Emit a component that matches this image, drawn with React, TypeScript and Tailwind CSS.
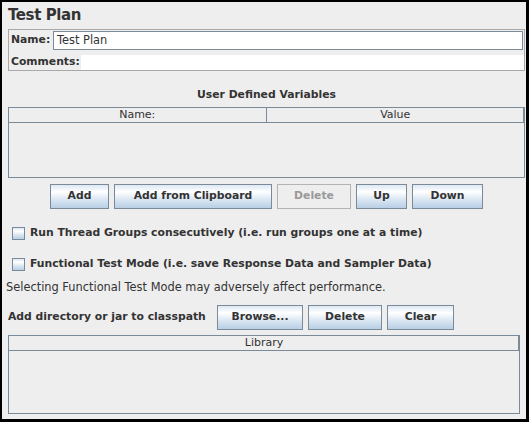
import React from 'react';

// Swing "Ocean" style push button
const Btn = ({label, w, disabled}: { label: string; w: string; disabled?: boolean }) => (
    <div
        className={`${w} h-[25px] flex items-center justify-center border font-bold text-[10.8px] ${
            disabled
                ? 'border-[#b3b3b3] bg-[#eeeeee] text-[#999999]'
                : 'border-[#7a8a99] bg-[linear-gradient(to_bottom,#dde8f3_0%,#ffffff_30%,#dde8f3_60%,#b8cfe5_100%)] text-[#333333]'
        }`}
    >
        {label}
    </div>
);

const Check = ({label}: { label: string }) => (
    <div className="h-[21px] flex items-center">
        <div
            className="ml-[4px] w-[13px] h-[13px] border border-[#7a8a99] bg-[linear-gradient(to_bottom,#dde8f3_0%,#ffffff_30%,#dde8f3_60%,#b8cfe5_100%)]"/>
        <span className="ml-[5px] font-bold text-[10.8px] whitespace-nowrap">{label}</span>
    </div>
);

export default function App() {
    return (
        <div
            className="w-[529px] h-[422px] overflow-hidden bg-[#eeeeee] border-solid border-black border-t-2 border-l-2 border-r-[3px] border-b-[3px] pl-[6px] pr-[1px] flex flex-col font-['DejaVu_Sans',sans-serif] text-[#333333]">
            {/* title */}
            <div className="h-[27px] shrink-0 pt-[3px] text-[15px] leading-[20px] font-bold tracking-[-0.4px]">Test Plan</div>

            {/* name / comments */}
            <div className="h-[42px] shrink-0 border border-[#a9a9a9] flex flex-col">
                <div className="mt-[1px] h-[19px] flex items-center">
                    <span className="w-[44px] pl-[2px] font-bold text-[10.8px]">Name:</span>
                    <div
                        className="flex-1 mr-[1px] h-[19px] border border-[#7a8a99] bg-white pl-[3px] text-[11.4px] leading-[17px]">Test
                        Plan
                    </div>
                </div>
                <div className="mt-[5px] h-[15px] flex items-center">
                    <span className="w-[72px] pl-[2px] font-bold text-[10.8px]">Comments:</span>
                    <div className="flex-1 h-[15px] bg-white"/>
                </div>
            </div>

            {/* user defined variables */}
            <div className="h-[36px] shrink-0 pt-[17px] leading-[14px] text-center font-bold text-[10.8px]">User Defined
                Variables
            </div>
            <div className="h-[71px] shrink-0 border border-[#7a8a99] flex flex-col">
                <div
                    className="h-[15px] border-b border-[#7a8a99] grid grid-cols-2 text-[11px] leading-[14px] shadow-[inset_-1px_0_0_#7a8a99]">
                    <div className="text-center border-r border-[#7a8a99]">Name:</div>
                    <div className="text-center">Value</div>
                </div>
            </div>

            <div className="mt-[6px] h-[25px] shrink-0 flex justify-center gap-[5px]">
                <Btn label="Add" w="w-[59px]"/>
                <Btn label="Add from Clipboard" w="w-[158px]"/>
                <Btn label="Delete" w="w-[74px]" disabled/>
                <Btn label="Up" w="w-[51px]"/>
                <Btn label="Down" w="w-[71px]"/>
            </div>

            {/* options */}
            <div className="mt-[14px] shrink-0">
                <Check label="Run Thread Groups consecutively (i.e. run groups one at a time)"/>
            </div>
            <div className="mt-[10px] shrink-0">
                <Check label="Functional Test Mode (i.e. save Response Data and Sampler Data)"/>
            </div>
            <div className="mt-[3px] h-[18px] shrink-0 -ml-[2px] text-[11.4px] leading-[18px] whitespace-nowrap">
                Selecting Functional Test Mode may adversely affect performance.
            </div>

            {/* classpath */}
            <div className="mt-[9px] h-[25px] shrink-0 flex items-center">
                <span className="w-[209px] font-bold text-[10.8px] whitespace-nowrap">Add directory or jar to classpath</span>
                <div className="flex gap-[5px]">
                    <Btn label="Browse..." w="w-[86px]"/>
                    <Btn label="Delete" w="w-[74px]"/>
                    <Btn label="Clear" w="w-[67px]"/>
                </div>
            </div>
            <div className="mt-[5px] w-[512px] h-[79px] shrink-0 border border-[#7a8a99] flex flex-col">
                <div
                    className="h-[15px] border-b border-[#7a8a99] text-center text-[11px] leading-[14px] shadow-[inset_-1px_0_0_#7a8a99]">Library
                </div>
            </div>
        </div>
    );
}
